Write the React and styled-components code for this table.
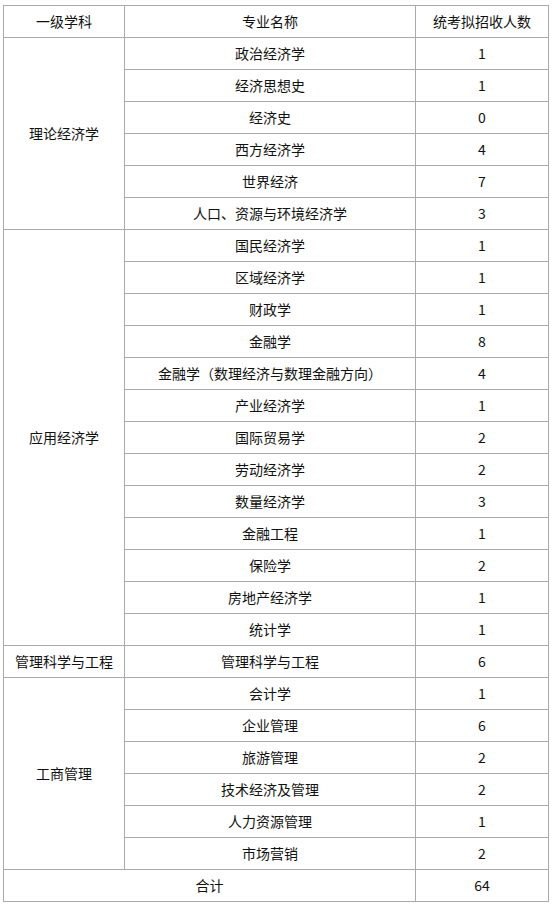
import React from 'react'
import styled, { createGlobalStyle } from 'styled-components'

const GlobalStyle = createGlobalStyle`
  body {
    margin: 0;
    background: #fff;
    font-family: "Noto Sans CJK SC", "Noto Sans", sans-serif;
  }
`

const groups = [
    {
        name: '理论经济学',
        rows: [
            ['政治经济学', 1],
            ['经济思想史', 1],
            ['经济史', 0],
            ['西方经济学', 4],
            ['世界经济', 7],
            ['人口、资源与环境经济学', 3],
        ],
    },
    {
        name: '应用经济学',
        rows: [
            ['国民经济学', 1],
            ['区域经济学', 1],
            ['财政学', 1],
            ['金融学', 8],
            ['金融学（数理经济与数理金融方向）', 4],
            ['产业经济学', 1],
            ['国际贸易学', 2],
            ['劳动经济学', 2],
            ['数量经济学', 3],
            ['金融工程', 1],
            ['保险学', 2],
            ['房地产经济学', 1],
            ['统计学', 1],
        ],
    },
    {
        name: '管理科学与工程',
        rows: [['管理科学与工程', 6]],
    },
    {
        name: '工商管理',
        rows: [
            ['会计学', 1],
            ['企业管理', 6],
            ['旅游管理', 2],
            ['技术经济及管理', 2],
            ['人力资源管理', 1],
            ['市场营销', 2],
        ],
    },
]

const App = () => {
    return (
        <Wrapper>
            <GlobalStyle />
            <Table>
                <colgroup>
                    <col style={{ width: 121 }} />
                    <col style={{ width: 291 }} />
                    <col style={{ width: 133 }} />
                </colgroup>
                <tbody>
                    <Row>
                        <Cell>一级学科</Cell>
                        <Cell>专业名称</Cell>
                        <Cell>统考拟招收人数</Cell>
                    </Row>
                    {groups.map((g) =>
                        g.rows.map((r, i) => (
                            <Row key={g.name + r[0]}>
                                {i === 0 && <Cell rowSpan={g.rows.length}>{g.name}</Cell>}
                                <Cell>{r[0]}</Cell>
                                <Cell>{r[1]}</Cell>
                            </Row>
                        ))
                    )}
                    <Row>
                        <Cell colSpan={2}>合计</Cell>
                        <Cell>64</Cell>
                    </Row>
                </tbody>
            </Table>
        </Wrapper>
    )
}

const Wrapper = styled.div`
    padding: 5px 0 0 3px;
`

const Table = styled.table`
    border-collapse: collapse;
    table-layout: fixed;
    width: 545px;
    border-top: 1px solid #000;
    border-left: 1px solid #000;
`

const Row = styled.tr`
    height: 32px;
`

const Cell = styled.td`
    border: 1px solid #aaa;
    padding: 0 0 2px;
    text-align: center;
    vertical-align: middle;
    font-size: 14px;
    line-height: 18px;
    color: #111;
    white-space: nowrap;
`

export default App
